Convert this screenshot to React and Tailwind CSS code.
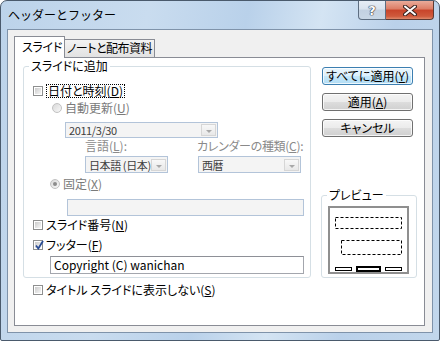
import React from "react";

const F = "font-['Noto_Sans_CJK_JP',sans-serif] [font-feature-settings:'palt']";

function Check({ checked }) {
  return (
    <span className="relative flex h-[10px] w-[10px] shrink-0 border border-[#8e8f8f] bg-white p-[1px]">
      <span className="h-full w-full bg-gradient-to-br from-[#cbcbcb] to-[#f7f7f7]" />
      {checked && (
        <svg className="absolute left-[1px] top-[-1px]" width="9" height="10" viewBox="0 0 9 10">
          <path d="M1 5.5 L3.3 8.5 L8 1" fill="none" stroke="#2b4d95" strokeWidth="1.8" />
        </svg>
      )}
    </span>
  );
}

function Radio({ checked }) {
  return (
    <span className="flex h-[10px] w-[10px] shrink-0 items-center justify-center rounded-full border border-[#c2c2c2] bg-gradient-to-br from-[#d9d9d9] to-[#f8f8f8]">
      {checked && <span className="h-[4px] w-[4px] rounded-full bg-[#8c8c8c]" />}
    </span>
  );
}

function Combo({ className, text }) {
  return (
    <div className={"flex items-center overflow-hidden border border-[#b3c4d9] bg-[#f4f4f4] pl-[3px] pr-[1px] " + className}>
      <span className="flex-1 overflow-hidden text-[11px] tracking-[-0.4px] text-[#404040]">{text}</span>
      <span className="flex h-[12px] w-[15px] shrink-0 items-center justify-center border border-[#d6d6d6] bg-gradient-to-b from-[#f8f8f8] to-[#e8e8e8]">
        <span className="mt-[3px] border-x-[3px] border-t-[3px] border-x-transparent border-t-[#a8a8a8]" />
      </span>
    </div>
  );
}

function Btn({ children, def }) {
  const skin = def
    ? "border-[#3c7fb1] bg-[linear-gradient(#eaf6fd,#dcf0fc_50%,#c6e8fb_50%,#b2dcf4)]"
    : "border-[#707070] bg-[linear-gradient(#f4f4f4,#ebebeb_50%,#dddddd_50%,#d0d0d0)]";
  return (
    <div className={skin + " ml-[1px] flex h-[18px] w-[91px] items-center justify-center rounded-[3px] border shadow-[inset_0_0_0_1px_rgba(255,255,255,0.75)]"}>
      {children}
    </div>
  );
}

export default function App() {
  return (
    <div className={F + " flex h-[341px] w-[440px] flex-col whitespace-nowrap rounded-t-[7px] rounded-b-[2px] border border-[#4a5a6c] bg-[linear-gradient(100deg,#bcd3ea_0%,#c9dcef_30%,#b9d1ea_50%,#d4e4f3_65%,#bad1ea_80%,#c2d7ec_100%)] text-[12px] leading-[14px] text-black"}>
      {/* title bar */}
      <div className="flex h-[28px] shrink-0 items-start">
        <span className="ml-[7px] mt-[6px] leading-[16px] [font-feature-settings:normal]">ヘッダーとフッター</span>
        <div className="ml-auto mr-[5px] flex">
          <div className="flex h-[19px] w-[28px] items-center justify-center rounded-bl-[4px] border border-t-0 border-[#5d6d80] bg-[linear-gradient(#e6edf5,#d9e3ee_45%,#c3d1e1_50%,#c9d7e6)]">
            <span className="font-['DejaVu_Sans',sans-serif] text-[13px] font-bold leading-[13px] text-white [text-shadow:0_0_1px_#223,0_0_1px_#223,0_0_1px_#223]">?</span>
          </div>
          <div className="flex h-[19px] w-[48px] items-center justify-center rounded-br-[4px] border border-l-0 border-t-0 border-[#5d3a33] bg-[linear-gradient(#e9ab9a,#dc7c64_45%,#c8442a_50%,#cf5a3c_85%,#df8a6c)]">
            <svg width="14" height="11" viewBox="0 0 14 11">
              <path d="M2 1.5 L12 9.5 M12 1.5 L2 9.5" stroke="#3a2420" strokeWidth="4" strokeLinecap="round" />
              <path d="M2 1.5 L12 9.5 M12 1.5 L2 9.5" stroke="#ffffff" strokeWidth="2" strokeLinecap="round" />
            </svg>
          </div>
        </div>
      </div>

      {/* client */}
      <div className="mx-[6px] flex h-[304px] flex-col border border-[#7f93aa] bg-[#f0f0f0] pl-[6px] pt-[6px]">
        {/* tabs */}
        <div className="relative z-10 flex h-[21px] items-start">
          <div className="h-[22px] w-[51px] border border-b-0 border-[#898c95] bg-white pl-[7px] pt-[3px] tracking-[-0.3px]">スライド</div>
          <div className="mt-[3px] h-[18px] w-[90px] border border-l-0 border-b-0 border-[#898c95] bg-gradient-to-b from-[#f3f3f3] to-[#e2e2e2] pl-[2px] pt-[1px] tracking-[-0.5px]">ノートと配布資料</div>
        </div>

        {/* panel */}
        <div className="flex h-[269px] w-[411px] border border-[#898c95] bg-white pl-[8px]">
          {/* left column */}
          <div className="flex w-[288px] flex-col pt-[8px]">
            <div className="flex h-[212px] flex-col rounded-[3px] border border-[#d5dfe5]">
              <div className="-mt-[8px] ml-[5px] w-fit bg-white px-[2px]">スライドに追加</div>

              <div className="mt-[11px] flex items-center pl-[9px]">
                <Check />
                <span className="ml-[3px] border border-dotted border-black px-[1px] leading-[12px]">日付と時刻(<u>D</u>)</span>
              </div>

              <div className="mt-[3px] flex items-center pl-[28px] text-[#7a7a7a]">
                <Radio />
                <span className="ml-[3px]">自動更新(<u>U</u>)</span>
              </div>

              <Combo className="ml-[41px] mt-[7px] h-[16px] w-[153px]" text="2011/3/30" />

              <div className="mt-[1px] flex text-[#8a8a8a]">
                <span className="ml-[61px] w-[112px]">言語(<u>L</u>):</span>
                <span className="tracking-[-0.3px]">カレンダーの種類(<u>C</u>):</span>
              </div>

              <div className="mt-[3px] flex">
                <Combo className="ml-[61px] h-[17px] w-[83px]" text="日本語 (日本)" />
                <Combo className="ml-[30px] h-[17px] w-[103px]" text="西暦" />
              </div>

              <div className="mt-[4px] flex items-center pl-[26px] text-[#7a7a7a]">
                <Radio checked />
                <span className="ml-[3px]">固定(<u>X</u>)</span>
              </div>

              <div className="ml-[43px] mt-[8px] h-[17px] w-[237px] border border-[#b3c4d9] bg-[#f4f4f4]" />

              <div className="mt-[2px] flex items-center pl-[9px]">
                <Check />
                <span className="ml-[3px]">スライド番号(<u>N</u>)</span>
              </div>

              <div className="mt-[6px] flex items-center pl-[9px]">
                <Check checked />
                <span className="ml-[3px]">フッター(<u>F</u>)</span>
              </div>

              <div className="ml-[26px] mt-[4px] flex h-[18px] w-[254px] items-center border border-[#a3a6ad] border-t-[#8e9097] bg-white pl-[3px]">
                Copyright (C) wanichan
              </div>
            </div>

            <div className="ml-[10px] mt-[5px] flex items-center">
              <Check />
              <span className="ml-[3px]">タイトル スライドに表示しない(<u>S</u>)</span>
            </div>
          </div>

          {/* right column */}
          <div className="ml-[10px] flex flex-col pt-[9px]">
            <Btn def>すべてに適用(<u>Y</u>)</Btn>
            <div className="mt-[8px]">
              <Btn>適用(<u>A</u>)</Btn>
            </div>
            <div className="mt-[8px]">
              <Btn>キャンセル</Btn>
            </div>

            <div className="mt-[58px] flex h-[83px] w-[96px] flex-col rounded-[3px] border border-[#d5dfe5]">
              <div className="-mt-[8px] ml-[5px] w-fit bg-white px-[2px]">プレビュー</div>
              <div className="ml-[6px] mt-[4px] h-[68px] w-[81px] border-2 border-[#8f8f8f] bg-white">
                <svg width="77" height="64" viewBox="0 0 77 64">
                  <rect x="5.5" y="9.5" width="66" height="11" fill="none" stroke="#000" strokeDasharray="3 2" />
                  <rect x="11.5" y="32.5" width="60" height="14" fill="none" stroke="#000" strokeDasharray="3 2" />
                  <rect x="5.5" y="59.5" width="16" height="3" fill="none" stroke="#000" />
                  <rect x="27" y="59" width="23" height="4" fill="none" stroke="#000" strokeWidth="2" />
                  <rect x="55.5" y="59.5" width="16" height="3" fill="none" stroke="#000" />
                </svg>
              </div>
            </div>
          </div>
        </div>
      </div>
    </div>
  );
}
